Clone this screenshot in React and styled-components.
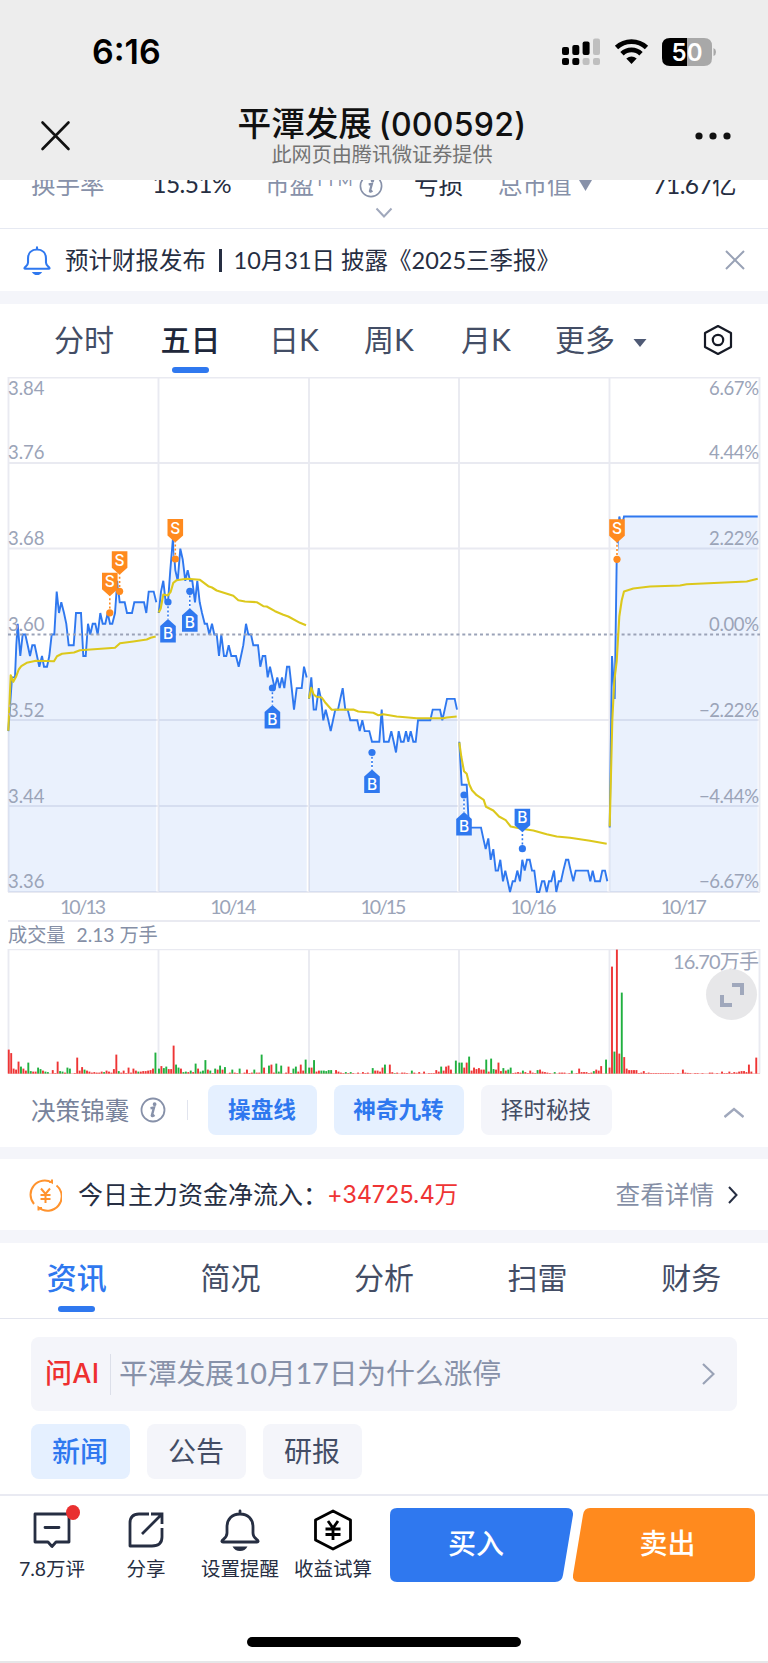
import React from 'react';
import styled, { createGlobalStyle } from 'styled-components';

const GlobalStyle = createGlobalStyle`
  * {
    box-sizing: border-box;
  }
  body {
    margin: 0;
    background: #fff;
    color: #262e42;
    font-family: Lato, 'Noto Sans CJK SC', sans-serif;
    -webkit-font-smoothing: antialiased;
  }
  button {
    border: 0;
    padding: 0;
    background: none;
    font: inherit;
    color: inherit;
  }
`;

const Page = styled.main`
  width: 768px;
  height: 1663px;
  overflow: hidden;
  display: flex;
  flex-direction: column;
  white-space: nowrap;
`;

const Header = styled.header`
  height: 180px;
  flex: none;
  background: #ededed;
  color: #111;
  font-family: Inter, 'Noto Sans CJK SC', sans-serif;
`;

const StatusBar = styled.div`
  height: 101px;
  padding: 2px 52px 0 92px;
  display: flex;
  align-items: center;
  justify-content: space-between;
`;

const Clock = styled.span`
  font-size: 34px;
  font-weight: 600;
  color: #000;
`;

const TitleBar = styled.div`
  height: 79px;
  display: grid;
  grid-template-columns: 111px 1fr 111px;
  justify-items: center;
`;

const TitleIcon = styled.svg`
  margin-top: 19px;
`;

const Heading = styled.div`
  display: flex;
  flex-direction: column;
  align-items: center;
  margin-left: -4px;
`;

const Title = styled.h1`
  margin: 4px 0 0;
  font-size: 33.6px;
  font-weight: 500;
  line-height: 38px;
  word-spacing: -2px;
  span {
    font-size: 32px;
    letter-spacing: 0.3px;
  }
`;

const Subtitle = styled.span`
  font-size: 20.1px;
  line-height: 22px;
  color: #737373;
`;

const Quotes = styled.section`
  height: 49px;
  flex: none;
  overflow: hidden;
  border-bottom: 1px solid #e6e9f2;
  display: flex;
  flex-direction: column;
  align-items: center;
  svg {
    flex: none;
  }
`;

const QuoteRow = styled.div`
  width: 100%;
  height: 18px;
  margin-top: -14px;
  padding: 0 32px 0 31px;
  display: grid;
  grid-template-columns: 200px 34px 198px 35px 1fr;
  align-items: center;
  font-size: 24.5px;
  flex: none;
`;

const Quote = styled.div`
  display: flex;
  align-items: center;
  justify-content: space-between;
  grid-column: ${(p) => p.$col};
  b {
    font-weight: 400;
    letter-spacing: -0.6px;
  }
`;

const QuoteLabel = styled.span`
  color: #8791a9;
  display: flex;
  align-items: center;
  svg {
    margin-top: 5px;
  }
  sup {
    font-size: 16px;
    line-height: 1;
    margin: -7px 5px 0 1px;
    letter-spacing: 1.9px;
  }
`;

const Notice = styled.section`
  height: 62px;
  flex: none;
  padding: 0 23px;
  display: flex;
  align-items: center;
  font-size: 23.5px;
  svg:last-child {
    margin-left: auto;
  }
`;

const NoticeText = styled.span`
  margin: -2px 0 0 14px;
  i {
    display: inline-block;
    width: 2.5px;
    height: 23px;
    margin: 0 12px 0 13px;
    vertical-align: -3px;
    background: #262e42;
  }
`;

const Band = styled.div`
  height: ${(p) => p.$h}px;
  flex: none;
  background: #f4f5fa;
`;

const PeriodTabs = styled.nav`
  height: 73px;
  flex: none;
  padding-left: 31px;
  display: grid;
  grid-template-columns: 106px 107px 100px 90px 104px 94px 16px 1fr;
  justify-items: center;
  svg {
    align-self: center;
  }
`;

const SettingsIcon = styled.svg`
  justify-self: start;
  margin: -1px 0 0 55px;
`;

const Tab = styled.button`
  display: flex;
  flex-direction: column;
  align-items: center;
  font-size: ${(p) => p.$size || 30}px;
  line-height: 40px;
  padding-top: 15px;
  color: #434d65;
  &[aria-selected='true'] {
    color: ${(p) => p.$active};
    font-weight: 500;
  }
  &[aria-selected='true']::after {
    content: '';
    width: 37px;
    height: 6px;
    margin-top: 8px;
    border-radius: 3px;
    background: #2f78ef;
  }
`;

const Chart = styled.svg`
  display: block;
  flex: none;
  font-family: Lato, 'Noto Sans CJK SC', sans-serif;
`;

const AxisText = styled.text`
  font-size: ${(p) => p.$size || 18.5}px;
  fill: #9ba4b8;
`;

const TagText = styled.text`
  font: 500 15.5px Inter, sans-serif;
  fill: #fff;
  text-anchor: middle;
`;

const VolumeTitle = styled.div`
  height: 27px;
  flex: none;
  padding-left: 8px;
  font-size: 19.2px;
  line-height: 26px;
  color: #858fa6;
  span {
    margin-left: 11px;
  }
`;

const VolumeWrap = styled.div`
  position: relative;
  flex: none;
  height: 126px;
`;

const ExpandButton = styled.button`
  position: absolute;
  left: 706px;
  top: 20px;
  width: 51px;
  height: 51px;
  border-radius: 50%;
  background: #e7e7e9;
  display: grid;
  place-items: center;
`;

const Tips = styled.section`
  height: 72px;
  flex: none;
  padding: 10px 24px 0 31px;
  display: flex;
  align-items: flex-start;
`;

const TipsTitle = styled.div`
  width: 157px;
  height: 50px;
  display: flex;
  align-items: center;
  gap: 11px;
  font-size: 24.6px;
  color: #78839b;
  padding-bottom: 3px;
  svg {
    margin-top: 2px;
  }
`;

const TipsDivider = styled.i`
  width: 1px;
  height: 20px;
  margin: 15px 20px 0 -1px;
  background: #e1e4ee;
`;

const Chip = styled.button`
  width: ${(p) => p.$w}px;
  height: ${(p) => p.$h}px;
  margin-right: 17px;
  padding: 0 1px 4px 0;
  border-radius: 8px;
  font-size: ${(p) => p.$size}px;
  font-weight: ${(p) => (p.$bold ? 700 : p.$on ? 500 : 400)};
  background: ${(p) => (p.$on ? '#e5f0ff' : '#f4f5fa')};
  color: ${(p) => (p.$on ? '#2f78ef' : '#434d65')};
`;

const TipsArrow = styled.svg`
  margin: 22px 0 0 auto;
`;

const Fund = styled.section`
  height: 71px;
  flex: none;
  padding: 0 30px 0 29px;
  display: flex;
  align-items: center;
  font-size: 25px;
`;

const FundLabel = styled.span`
  margin: -3px 0 0 16px;
`;

const FundValue = styled.span`
  margin: -3px 0 0 -1px;
  color: #ef3434;
  font-family: Inter, 'Noto Sans CJK SC', sans-serif;
  font-size: 23.7px;
  letter-spacing: -0.2px;
`;

const FundMore = styled.span`
  margin: -3px 14px 0 auto;
  font-size: 24.6px;
  color: #858fa6;
`;

const InfoTabs = styled.nav`
  height: 76px;
  flex: none;
  display: grid;
  grid-template-columns: repeat(5, 1fr);
  border-bottom: 1px solid #e3e5ef;
  ${Tab} {
    padding-top: 14px;
  }
  ${Tab}[aria-selected='true']::after {
    margin-top: 9px;
  }
`;

const News = styled.section`
  height: 175px;
  flex: none;
  padding: 18px 31px 0;
`;

const AskBox = styled.div`
  height: 74px;
  border-radius: 8px;
  background: #f4f5fa;
  padding: 0 22px 0 14px;
  display: flex;
  align-items: center;
  font-size: 28.9px;
  letter-spacing: -0.2px;
  color: #8791a9;
  strong {
    width: 66px;
    height: 41px;
    padding-top: 1px;
    border-right: 1px solid #dcdfe9;
    font: 500 27px/38px Inter, 'Noto Sans CJK SC', sans-serif;
    letter-spacing: 0.3px;
    color: #ee2f2f;
  }
  span {
    margin: -6px 0 0 8px;
  }
  svg {
    margin-left: auto;
  }
`;

const Filters = styled.div`
  display: flex;
  margin-top: 13px;
`;

const BottomBar = styled.footer`
  height: 169px;
  flex: none;
  border-top: 2px solid #e9eaf2;
  border-bottom: 2px solid #e6e6e8;
  display: flex;
  flex-direction: column;
  align-items: center;
`;

const Actions = styled.div`
  width: 768px;
  height: 141px;
  display: grid;
  grid-template-columns: 104px 84px 104px 82px 16px 183px 182px;
`;

const Action = styled.button`
  position: relative;
  height: 88px;
  display: flex;
  flex-direction: column;
  align-items: center;
  font-size: 19.5px;
  line-height: 28px;
  svg {
    margin: 13px 0 4px;
  }
`;

const Badge = styled.i`
  position: absolute;
  left: 66px;
  top: 9px;
  width: 14px;
  height: 15px;
  border-radius: 50%;
  background: #e93030;
`;

const TradeButton = styled.button`
  grid-column: ${(p) => p.$col};
  display: grid;
  height: 74px;
  margin-top: 12px;
  place-items: center;
  color: #fff;
  font-size: 28px;
  font-weight: 500;
  svg,
  span {
    grid-area: 1 / 1;
  }
  span {
    padding: 0 11px 6px 0;
    margin-left: ${(p) => p.$shift || 0}px;
  }
`;

const HomeIndicator = styled.div`
  width: 274px;
  height: 10px;
  border-radius: 5px;
  background: #000;
`;

// x is in canvas pixels (3 per css pixel), price in ticks of 0.01 from 3.60
const DAYS = [
  {
    origin: 0,
    base: 403,
    price: [
      [25, -9], [36, -4], [45, -4], [49, -1], [53, 1], [61, -2], [68, 0], [76, 0], [83, -1], [90, -2], [97, -1],
      [104, -1], [111, -2], [118, -3], [126, -2], [132, -3], [141, -3], [148, -2], [155, 0], [163, 0], [170, 4],
      [177, 2], [184, 3], [192, 2], [199, 1], [206, -1], [221, -1], [228, 2], [243, 2], [250, -2], [257, -2],
      [264, 1], [271, 0], [278, 1], [286, 1], [293, 0], [301, 2], [308, 1], [316, 1], [323, 2], [330, 1], [337, 1],
      [345, 2], [352, 5], [359, 3], [374, 3], [381, 2], [396, 2], [403, 3], [432, 3], [439, 2], [446, 4], [461, 4],
      [469, 3],
    ],
    avg: [
      [25, 692], [32, 525], [40, 545], [48, 530], [56, 508], [64, 498], [80, 488], [108, 482], [162, 483], [171, 468],
      [186, 461], [222, 457], [240, 450], [345, 443], [360, 429], [400, 424], [440, 418], [452, 413], [467, 409],
    ],
    volume: [
      24, 20.5, 5, 4, 12, -7, 5, 3, -11, -2.5, 2, 2, -6, -4.5, 3, -2, -1.5, 0, 3.5, 0.5, 12, -2.5, -2, 1, -6, -5, 0,
      0.5, 16, 3, 6.5, -4, 3, 2, 1, 1.5, 1, 1, 2, -1.5, 3, 2, 1, 4.5, 19, -2.5, 1, 3, 0.5, 6, 1, 5, 3, -2, 2, 2.5,
      2.5, 3, 3.5, 5, -21,
    ],
  },
  {
    origin: 0,
    base: 403,
    price: [
      [476, 2], [483, 4], [490, 5], [497, 3], [504, 3], [511, 6], [519, 9], [526, 6], [533, 5], [541, 8], [548, 7],
      [556, 5], [563, 6], [570, 5], [577, 5], [585, 3], [592, 5], [599, 3], [606, 2], [614, 1], [621, 1], [628, 0],
      [636, 1], [643, 0], [650, 0], [657, -2], [664, 0], [672, -2], [679, -2], [686, -1], [694, -2], [708, -2],
      [716, -3], [723, -2], [730, -1], [738, 1], [745, 0], [753, 0], [760, -1], [774, -1], [781, -3], [788, -2],
      [796, -2], [803, -4], [810, -3], [817, -4], [824, -5], [832, -4], [839, -5], [846, -4], [853, -5], [861, -3],
      [868, -3], [875, -5], [882, -7], [890, -5], [905, -5], [912, -3], [920, -4],
    ],
    avg: [
      [476, 337], [482, 325], [490, 283], [503, 286], [512, 275], [520, 248], [530, 240], [560, 236], [600, 239],
      [625, 258], [636, 262], [650, 271], [700, 287], [715, 300], [735, 304], [770, 306], [790, 318], [800, 319],
      [825, 333], [850, 344], [865, 349], [900, 368], [918, 375],
    ],
    volume: [
      -5, 7.5, -5.5, -7, 4.5, 4.5, 28, -9, -6, 5, -1.5, -2, 1.5, -3, 1.5, -10, 5, -2, -3, -13.5, 4, -3, 0.5, -5, 4,
      -8, 4, -6.5, 0, 1, -4, 1, 0.5, -5, 0, 1, 4, 0.5, 1, -4, 1, 1, -19, 6, 0, -8, 9, 1, -10, -2, -8, 0, 1, 7, 0.5,
      -5, -7, 2, 9, 3, -14,
    ],
  },
  {
    origin: 900,
    base: 103,
    price: [
      [27, -6], [34, -4], [41, -7], [48, -7], [56, -5], [63, -6], [70, -8], [77, -7], [85, -8], [92, -9], [99, -8],
      [106, -7], [114, -7], [121, -6], [128, -5], [136, -7], [143, -7], [151, -8], [172, -8], [179, -9], [187, -8],
      [194, -9], [208, -9], [216, -10], [238, -10], [245, -7], [252, -10], [266, -10], [274, -9], [281, -10],
      [288, -11], [296, -9], [303, -10], [311, -10], [318, -9], [325, -10], [332, -9], [340, -10], [347, -10],
      [354, -8], [391, -8], [398, -7], [420, -7], [427, -8], [434, -7], [441, -6], [464, -6], [471, -7],
    ],
    avg: [
      [27, 295], [34, 263], [41, 283], [50, 290], [65, 292], [75, 306], [95, 329], [160, 328], [175, 334], [220, 338],
      [235, 345], [250, 342], [290, 349], [350, 354], [430, 354], [440, 352], [470, 349],
    ],
    volume: [
      -6, 6, -13.5, 2, 3, -3, -3, -2.5, -3.5, -3.5, 0, 3.5, 2, 1, 0.5, -1.5, 0.5, -1.5, 0.5, 0, 1, 0, 1.5, 0.5, 1, 0,
      -5.5, 3, 3, 2, 6, -9, 0, 9, 1.5, -0.5, 1, 0, 1, 1, 0.5, 0, -3, 1, 0, 1.5, 0, 2, 0, 0.5, 0.5, 0.5, 3.5, 2, -7, 3,
      7, 8, 4, 0, -13,
    ],
  },
  {
    origin: 900,
    base: 103,
    price: [
      [478, -10], [485, -14], [500, -14], [507, -18], [543, -18], [550, -19], [557, -20], [565, -19], [572, -21],
      [580, -20], [587, -22], [594, -22], [601, -21], [609, -23], [616, -22], [623, -23], [630, -24], [638, -23],
      [645, -23], [652, -22], [660, -23], [667, -21], [674, -22], [681, -21], [689, -21], [696, -22], [703, -22],
      [711, -24], [718, -24], [726, -23], [733, -23], [740, -24], [747, -23], [754, -23], [762, -22], [769, -24],
      [776, -23], [783, -23], [790, -22], [798, -21], [805, -21], [812, -22], [820, -23], [827, -22], [864, -22],
      [871, -23], [878, -22], [885, -23], [900, -23], [907, -22], [915, -22], [922, -23],
    ],
    avg: [
      [478, 427], [484, 470], [492, 513], [500, 521], [508, 553], [516, 570], [530, 585], [551, 599], [558, 620],
      [580, 631], [597, 649], [617, 660], [632, 679], [665, 686], [700, 691], [740, 702], [770, 709], [810, 713],
      [870, 722], [920, 731],
    ],
    volume: [
      -11, -11, 6, 11, -17, 3, 6, 4.5, 5.5, 4, 4, -14, 2, -15, -4.5, 4, 11, 2.5, -5.5, 3, -4, -6, 0.5, 1, 1.5, 1, -3,
      1.5, 0.5, 3, 1, 0.5, -3.5, 4, 2, 1.5, 1, 0.5, 0, -1.5, 0, 1, 1, 1, 0, 0.5, -3, 0, 0.5, 5, 1.5, 1.5, 1.5, 0.5, 1,
      -2.5, 4, 3, 7.5, 0, -14,
    ],
  },
  {
    origin: 1320,
    base: 0,
    price: [[509, -18], [516, -2], [524, -6], [530, 7], [538, 11], [545, 10], [552, 11], [953, 11]],
    avg: [
      [509, 576], [517, 257], [523, 139], [530, 80], [538, -54], [545, -102], [552, -129], [580, -138], [630, -144],
      [720, -147], [740, -151], [920, -159], [953, -167],
    ],
    volume: [
      6, 107, -22, 124, 20, -81, 16.5, 5, 3.5, 3.5, 3.5, 3.5, 0.5, 1, 2.5, 0.5, 1, 0.5, 0.5, 0.5, 0.5, 0.5, 0.5, 0.5,
      0.5, 0.5, 0.5, 0, 0.5, 0, 4, 1, 0.7, 0.5, 0, 0.5, 0.5, 0, 0.5, 0, 0, 1, 1, 0, 0.5, 0, 2, 0.5, 0.5, 2, 0.5, 1.5,
      1, 2, 2.5, 2.5, 1.5, 9, 2, 0, 16,
    ],
  },
];

const ZERO = 257.5;
const TICK = 10.73;
const GRID_X = [8.5, 158.5, 309, 459, 609.5, 759.5];
const GRID_Y = [0.5, 86, 171.5, 343, 429, 515];

const MARKS = [
  { type: 'S', x: 109.8, y: 235.8, tag: 'above' },
  { type: 'S', x: 119.6, y: 214.3, tag: 'above' },
  { type: 'S', x: 175.3, y: 182, tag: 'above' },
  { type: 'B', x: 168, y: 225, tag: 'below' },
  { type: 'B', x: 189.8, y: 214.3, tag: 'below' },
  { type: 'B', x: 272.4, y: 311, tag: 'below' },
  { type: 'B', x: 372, y: 375.5, tag: 'below' },
  { type: 'B', x: 464, y: 418, tag: 'below' },
  { type: 'B', x: 522.4, y: 471.7, tag: 'above' },
  { type: 'S', x: 617, y: 182.3, tag: 'above' },
];

const PRICE_LABELS = [
  ['3.84', '6.67%', 17.5], ['3.76', '4.44%', 82], ['3.68', '2.22%', 168], ['3.60', '0.00%', 253.5],
  ['3.52', '−2.22%', 339.5], ['3.44', '−4.44%', 425.5], ['3.36', '−6.67%', 511],
];

const toPoints = (points) => points.map(([x, y]) => `${x.toFixed(1)},${y.toFixed(1)}`).join(' ');

const Mark = ({ type, x, y, tag }) => {
  const color = type === 'S' ? '#ff8a1e' : '#2f78ef';
  const above = tag === 'above';
  return (
    <g transform={`translate(${x} ${y})`}>
      <line y2={above ? -16 : 16} stroke="#fff" strokeWidth="2" />
      <line y2={above ? -17 : 17} stroke={color} strokeWidth="1.6" strokeDasharray="2 2.2" />
      <circle r="3.6" fill={color} />
      <path
        d={above ? 'M-7.8-40H7.8V-23.5L0-16.5L-7.8-23.5Z' : 'M-7.8 40.5H7.8V24L0 17L-7.8 24Z'}
        fill={color}
      />
      <TagText y={above ? -25.5 : 37}>{type}</TagText>
    </g>
  );
};

const PriceChart = () => (
  <Chart width="768" height="545" viewBox="0 0 768 545">
    <g stroke="#e9eaf1" strokeWidth="1.9">
      {GRID_X.map((x) => <line key={x} x1={x} x2={x} y1="0" y2="515" />)}
      {GRID_Y.map((y) => <line key={y} x1="8" x2="760" y1={y} y2={y} />)}
      <line x1="8" x2="760" y1="544" y2="544" />
    </g>
    {DAYS.map(({ origin, price }, i) => {
      const line = price.map(([x, p]) => [(x + origin) / 3, ZERO - p * TICK]);
      const area = [[line[0][0], 515], ...line, [line[line.length - 1][0], 515]];
      return (
        <g key={i}>
          <polygon points={toPoints(area)} fill="#2f78ef" opacity="0.1" />
          <polyline points={toPoints(line)} fill="none" stroke="#2f78ef" strokeWidth="1.9" />
        </g>
      );
    })}
    <line x1="8" x2="760" y1={ZERO} y2={ZERO} stroke="#9ba3b8" strokeWidth="1.9" strokeDasharray="3 2.9" />
    {DAYS.map(({ origin, base, avg }, i) => (
      <polyline
        key={i}
        points={toPoints(avg.map(([x, y]) => [(x + origin) / 3, ZERO + (y - base) / 3]))}
        fill="none"
        stroke="#dcc81c"
        strokeWidth="2.1"
        strokeLinejoin="round"
      />
    ))}
    {PRICE_LABELS.map(([left, right, y]) => (
      <g key={left}>
        <AxisText x="8" y={y} textLength="36.5">{left}</AxisText>
        <AxisText x="759" y={y} textAnchor="end" textLength={right.length > 5 ? 60 : 50}>{right}</AxisText>
      </g>
    ))}
    {['10/13', '10/14', '10/15', '10/16', '10/17'].map((day, i) => (
      <AxisText key={day} x={83 + i * 150.2} y="537" $size={19.5} textAnchor="middle" textLength="46">{day}</AxisText>
    ))}
    {MARKS.map((mark) => <Mark key={mark.x} {...mark} />)}
  </Chart>
);

const VolumeChart = () => (
  <VolumeWrap>
    <Chart width="768" height="126" viewBox="0 0 768 126">
      <g stroke="#e9eaf1" strokeWidth="1.9">
        {GRID_X.map((x) => <line key={x} x1={x} x2={x} y1="0" y2="124.5" />)}
        <line x1="8" x2="760" y1="0.2" y2="0.2" />
      </g>
      <line x1="8" x2="760" y1="124.5" y2="124.5" stroke="#f5b5b5" strokeWidth="0.7" />
      {DAYS.map(({ volume }, d) =>
        volume.map((v, i) => (
          <rect
            key={`${d}-${i}`}
            x={7.8 + d * 150.2 + i * 2.445}
            y={124.6 - Math.abs(v)}
            width="1.9"
            height={Math.abs(v)}
            fill={v < 0 ? '#20b040' : '#ee3535'}
          />
        ))
      )}
      <AxisText x="759" y="19.5" $size={20} textAnchor="end" textLength="86">16.70万手</AxisText>
    </Chart>
    <ExpandButton aria-label="全屏">
      <svg width="26" height="26" fill="none" stroke="#a0a8bc" strokeWidth="4">
        <path d="M13 3H23V13M3 13V23H13" />
      </svg>
    </ExpandButton>
  </VolumeWrap>
);

const InfoIcon = ({ size }) => (
  <svg width={size} height={size} viewBox="0 0 26 26" fill="none" stroke="#8791a9" strokeWidth="1.8">
    <circle cx="13" cy="13" r="11.5" />
    <path d="M10.500 11.200L14 10.600L11.800 18.600Q12.200 19.800 14.500 18" strokeWidth="2.400" />
    <circle cx="14.600" cy="7.200" r="1" fill="#8791a9" />
  </svg>
);

const BellIcon = ({ width, height, color, strokeWidth }) => (
  <svg width={width} height={height} viewBox="0 0 40 42" fill="none" stroke={color} strokeWidth={strokeWidth}>
    <path
      d="M20 2V5M3 33H37Q39 33 37.500 31C35 29 33 28 33 24V18C33 10 28 5 20 5S7 10 7 18V24C7 28 5 29 2.500 31Q1 33 3 33Z"
      strokeLinejoin="round"
      strokeLinecap="round"
    />
    <path d="M12.500 37.500H27.500Q25 42 20 42T12.500 37.500Z" fill={color} stroke="none" />
  </svg>
);

const StatusIcons = () => (
  <svg width="154" height="28" viewBox="0 0 154 28">
    <g fill="#000">
      <rect x="0" y="9" width="7" height="8" rx="2" />
      <rect x="10.300" y="7" width="7" height="10" rx="2" />
      <rect x="20.600" y="3.500" width="7" height="13.500" rx="2" />
      <rect x="0" y="20" width="7" height="7" rx="2" />
      <rect x="10.300" y="20" width="7" height="7" rx="2" />
    </g>
    <g fill="#bfbfbf">
      <rect x="31" y="0.500" width="7" height="16.500" rx="2" />
      <rect x="20.600" y="20" width="7" height="7" rx="2" />
      <rect x="31" y="20" width="7" height="7" rx="2" />
    </g>
    <g fill="none" stroke="#000" strokeWidth="4.800">
      <path d="M54.500 9.500A22 22 0 0 1 84.500 9.500" />
      <path d="M60 15.700A13.500 13.500 0 0 1 79 15.700" />
    </g>
    <path d="M64.300 20.500Q69.500 16.300 74.700 20.500L69.500 26Z" />
    <path d="M108 0H125V28H108Q100 28 100 20V8Q100 0 108 0Z" />
    <path d="M125 0H142Q150 0 150 8V20Q150 28 142 28H125Z" fill="#a8a8a8" />
    <path d="M151.500 10Q154 11 154 14T151.500 18Z" fill="#a8a8a8" />
    <text x="125" y="22.500" textAnchor="middle" fontSize="24" fontWeight="600" fill="#fff" textLength="31">50</text>
  </svg>
);

const PERIODS = ['分时', '五日', '日K', '周K', '月K', '更多'];
const INFO_TABS = ['资讯', '简况', '分析', '扫雷', '财务'];

const App = () => (
  <Page>
    <GlobalStyle />
    <Header>
      <StatusBar>
        <Clock>6:16</Clock>
        <StatusIcons />
      </StatusBar>
      <TitleBar>
        <TitleIcon width="32" height="32" stroke="#111" strokeWidth="2.6" strokeLinecap="round">
          <path d="M2.500 2.500L28.500 29M28.500 2.500L2.500 29" />
        </TitleIcon>
        <Heading>
          <Title>平潭发展 <span>(000592)</span></Title>
          <Subtitle>此网页由腾讯微证券提供</Subtitle>
        </Heading>
        <TitleIcon width="36" height="32" fill="#111">
          <circle cx="4" cy="16" r="3.600" />
          <circle cx="18" cy="16" r="3.600" />
          <circle cx="32" cy="16" r="3.600" />
        </TitleIcon>
      </TitleBar>
    </Header>
    <Quotes>
      <QuoteRow>
        <Quote $col={1}><QuoteLabel>换手率</QuoteLabel><b>15.51%</b></Quote>
        <Quote $col={3}>
          <QuoteLabel>市盈<sup>TTM</sup><InfoIcon size={24} /></QuoteLabel>亏损
        </Quote>
        <Quote $col={5}>
          <QuoteLabel>
            总市值
            <svg width="26" height="12" fill="#8791a9"><path d="M7 0H20L13.500 11Z" /></svg>
          </QuoteLabel>
          <b>71.67亿</b>
        </Quote>
      </QuoteRow>
      <svg width="18" height="34" fill="none" stroke="#a0a8bc" strokeWidth="2">
        <path d="M1.500 24.500L9 32.500L16.500 24.500" />
      </svg>
    </Quotes>
    <Notice>
      <BellIcon width={28} height={29} color="#2f78ef" strokeWidth={3} />
      <NoticeText>预计财报发布<i />10月31日 披露《2025三季报》</NoticeText>
      <svg width="20" height="20" stroke="#99a2b6" strokeWidth="2"><path d="M1 1L19 19M19 1L1 19" /></svg>
    </Notice>
    <Band $h={13} />
    <PeriodTabs>
      {PERIODS.map((name) => (
        <Tab key={name} $active="#20273a" aria-selected={name === '五日'}>{name}</Tab>
      ))}
      <svg width="16" height="12" fill="#4f5a75"><path d="M1.500 4H14.500L8 12Z" /></svg>
      <SettingsIcon width="30" height="34" viewBox="0 0 30 34" fill="none" stroke="#161a26" strokeWidth="2.200">
        <path d="M15 3L28 10V24L15 31L2 24V10Z" strokeLinejoin="round" />
        <circle cx="15" cy="17" r="5.200" />
      </SettingsIcon>
    </PeriodTabs>
    <PriceChart />
    <VolumeTitle>成交量<span>2.13 万手</span></VolumeTitle>
    <VolumeChart />
    <Tips>
      <TipsTitle>决策锦囊<InfoIcon size={26} /></TipsTitle>
      <TipsDivider />
      <Chip $w={109} $h={50} $size={22.6} $on $bold>操盘线</Chip>
      <Chip $w={130} $h={50} $size={22.6} $on $bold>神奇九转</Chip>
      <Chip $w={131} $h={50} $size={22.6}>择时秘技</Chip>
      <TipsArrow width="20" height="11" fill="none" stroke="#a0a8bc" strokeWidth="2.400">
        <path d="M0.500 10L10 2L19.500 10" />
      </TipsArrow>
    </Tips>
    <Band $h={12} />
    <Fund>
      <svg width="33" height="34" viewBox="0 0 33 34" fill="none" stroke="#ff932e" strokeWidth="2">
        <path d="M5 26A14.200 14.200 0 0 1 23 4.500V1.500M27.500 7.500A14.200 14.200 0 0 1 9.500 29.500V32.500M20 4H24M9 30H13" />
        <path d="M12 10.500L16.500 16L21 10.500M11.500 17H21.500M11.500 21H21.500M16.500 16V25" />
      </svg>
      <FundLabel>今日主力资金净流入：</FundLabel>
      <FundValue>+34725.4万</FundValue>
      <FundMore>查看详情</FundMore>
      <svg width="10" height="18" fill="none" stroke="#262e42" strokeWidth="2"><path d="M1 1L8.500 9L1 17" /></svg>
    </Fund>
    <Band $h={13} />
    <InfoTabs>
      {INFO_TABS.map((name) => (
        <Tab key={name} $active="#2f78ef" aria-selected={name === '资讯'}>{name}</Tab>
      ))}
    </InfoTabs>
    <News>
      <AskBox>
        <strong>问AI</strong>
        <span>平潭发展10月17日为什么涨停</span>
        <svg width="13" height="22" fill="none" stroke="#99a2b6" strokeWidth="2.200"><path d="M1 1L11.500 11L1 21" /></svg>
      </AskBox>
      <Filters>
        <Chip $w={99} $h={55} $size={28} $on>新闻</Chip>
        <Chip $w={99} $h={55} $size={28}>公告</Chip>
        <Chip $w={99} $h={55} $size={28}>研报</Chip>
      </Filters>
    </News>
    <BottomBar>
      <Actions>
        <Action>
          <svg width="38" height="42" fill="none" stroke="#262e42" strokeWidth="2.800" strokeLinejoin="round">
            <path d="M2 5H36V33H23L19 37.500L15 33H2ZM12 18.500H26" strokeLinecap="round" />
          </svg>
          <Badge />
          7.8万评
        </Action>
        <Action>
          <svg width="38" height="42" fill="none" stroke="#262e42" strokeWidth="2.800">
            <path d="M22 5H12Q3 5 3 14V37H25Q35 37 35 28V19" strokeLinejoin="round" />
            <path d="M24 5H35V15M35 5L15 25" />
          </svg>
          分享
        </Action>
        <Action>
          <BellIcon width={40} height={42} color="#262e42" strokeWidth={2.8} />
          设置提醒
        </Action>
        <Action>
          <svg width="40" height="42" fill="none" stroke="#000" strokeWidth="2.800">
            <path d="M20 2L37.500 11V31L20 40L2.500 31V11Z" strokeLinejoin="round" />
            <path d="M15 12L20 19L25 12M12.500 20H27.500M12.500 25.500H27.500M20 19V31" />
          </svg>
          收益试算
        </Action>
        <TradeButton $col={6}>
          <svg width="183" height="74" fill="#2f78ef">
            <path d="M7 0H176Q183.500 0 183 7L173 67Q172 74 165 74H7Q0 74 0 67V7Q0 0 7 0Z" />
          </svg>
          <span>买入</span>
        </TradeButton>
        <TradeButton $col={7} $shift={18}>
          <svg width="182" height="74" fill="#ff8a1e">
            <path d="M17 0H175Q182 0 182 7V67Q182 74 175 74H7Q-1 74 0 67L10 7Q11 0 17 0Z" />
          </svg>
          <span>卖出</span>
        </TradeButton>
      </Actions>
      <HomeIndicator />
    </BottomBar>
  </Page>
);

export default App;
